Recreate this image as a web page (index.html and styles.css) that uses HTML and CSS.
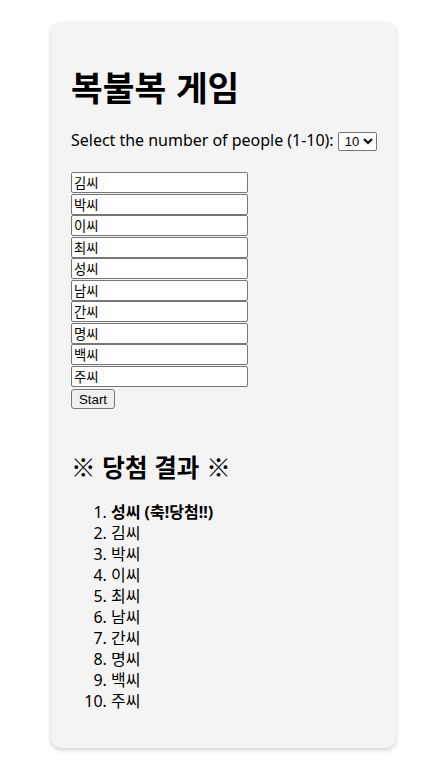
FILE: index.html
```html
<!DOCTYPE html>
<html lang="ko">
<head>
<meta charset="utf-8">
<title>복불복 게임</title>
<link rel="stylesheet" href="styles.css">
</head>
<body>
<div class="card">
  <h1 class="title">복불복 게임</h1>
  <p class="count">Select the number of people (1-10): <select class="count-select"><option>10</option></select></p>
  <div class="names">
    <input class="name" type="text" value="김씨">
    <input class="name" type="text" value="박씨">
    <input class="name" type="text" value="이씨">
    <input class="name" type="text" value="최씨">
    <input class="name" type="text" value="성씨">
    <input class="name" type="text" value="남씨">
    <input class="name" type="text" value="간씨">
    <input class="name" type="text" value="명씨">
    <input class="name" type="text" value="백씨">
    <input class="name" type="text" value="주씨">
    <button class="start" type="button">Start</button>
  </div>
  <h2 class="result-title">※ 당첨 결과 ※</h2>
  <ol class="results">
    <li><strong class="winner">성씨 (축!당첨!!)</strong></li>
    <li>김씨</li>
    <li>박씨</li>
    <li>이씨</li>
    <li>최씨</li>
    <li>남씨</li>
    <li>간씨</li>
    <li>명씨</li>
    <li>백씨</li>
    <li>주씨</li>
  </ol>
</div>
</body>
</html>
```

FILE: styles.css
```css
html, body {
  background: #ffffff;
}
body {
  margin: 0;
  padding: 22px 46px 22px 51px;
  font-family: "Noto Sans", "Noto Sans CJK KR", sans-serif;
  font-size: 16px;
  color: #000;
}
.card {
  background: #f4f4f4;
  border-radius: 10px;
  box-shadow: 0 2px 5px rgba(0, 0, 0, 0.18);
  padding: 20px 20px 20px 20px;
}
.title {
  font-family: "Noto Sans CJK KR", sans-serif;
  font-size: 34.5px;
  font-weight: 700;
  line-height: 44px;
  margin: 22px 0 22px;
}
.count {
  margin: 0 0 21px;
  line-height: 21px;
  white-space: nowrap;
  letter-spacing: -0.02px;
}
.count-select {
  vertical-align: middle;
  letter-spacing: 0;
  font-family: "Liberation Sans", sans-serif;
  font-size: 13px;
  width: 39px;
  height: 19px;
  padding: 0 0 0 2px;
  border: 1px solid #767676;
  border-radius: 2px;
  background: #fff;
}
.names {
  display: flex;
  flex-direction: column;
  align-items: flex-start;
  gap: 0.5px;
}
.name {
  box-sizing: border-box;
  width: 177px;
  height: 21px;
  margin: 0;
  padding: 1px 2px;
  border: 1px solid #767676;
  border-radius: 2px;
  background: #fff;
  font-family: "Liberation Sans", "Noto Sans CJK KR", sans-serif;
  font-size: 13.33px;
  color: #000;
}
.start {
  box-sizing: border-box;
  margin-top: 2px;
  width: 44px;
  height: 20px;
  padding: 0;
  border: 1px solid #767676;
  border-radius: 3px;
  background: #efefef;
  font-family: "Liberation Sans", sans-serif;
  font-size: 13.33px;
  color: #000;
}
.result-title {
  font-family: "Noto Sans CJK KR", sans-serif;
  font-size: 24.5px;
  font-weight: 700;
  line-height: 32px;
  margin: 42px 0 19px;
}
.results {
  margin: 0 0 16px;
  padding-left: 40px;
  line-height: 21px;
}
.winner {
  font-weight: 700;
}
```
